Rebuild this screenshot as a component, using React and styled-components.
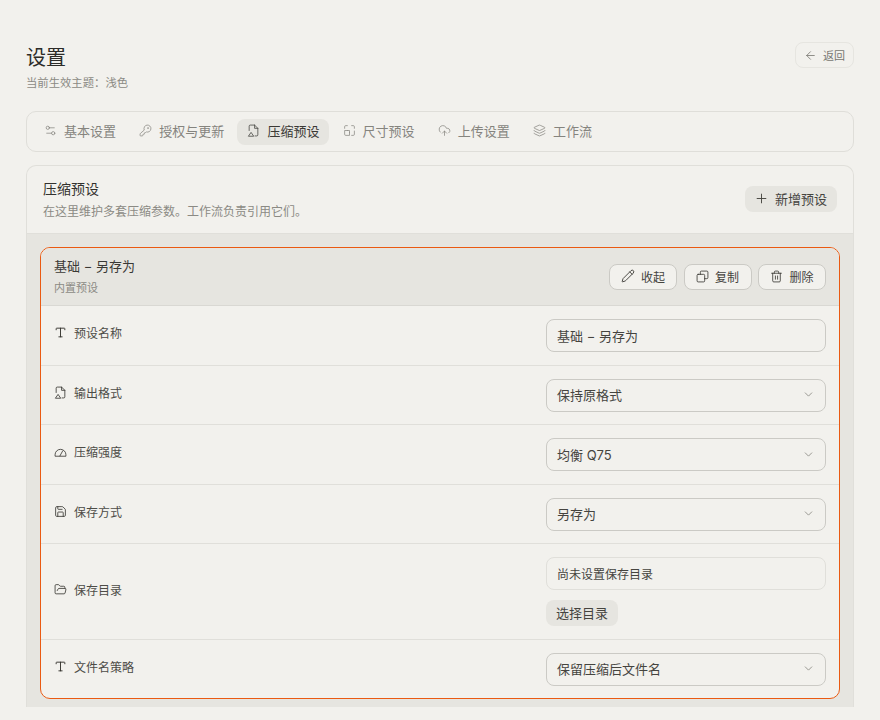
import styled, { createGlobalStyle } from "styled-components";
import {
  ArrowLeft,
  ChevronDown,
  CloudUpload,
  FolderOpen,
  KeyRound,
  Layers,
  Pencil,
  Plus,
  Save,
  Settings2,
  Trash2,
  Type,
} from "lucide-react";

const GlobalStyle = createGlobalStyle`
  html, body {
    margin: 0;
    height: 100%;
    overflow: hidden;
    background: #f2f1ed;
  }
  body {
    font-family: "Inter", "Liberation Sans", "Noto Sans CJK SC", sans-serif;
    color: #3a3935;
  }
  * { box-sizing: border-box; }
`;

const Page = styled.div`
  height: 720px;
  padding: 42px 26px 13px;
  display: flex;
  flex-direction: column;
`;

const Header = styled.header`
  display: flex;
  justify-content: space-between;
  align-items: flex-start;
  height: 69px;
`;

const Title = styled.h1`
  margin: 0;
  padding-top: 2px;
  font-size: 20px;
  line-height: 28px;
  font-weight: 400;
  color: #2c2b28;
`;

const Subtitle = styled.p`
  margin: 3px 0 0;
  font-size: 11.35px;
  line-height: 16px;
  color: #8b8a84;
`;

const BackButton = styled.button`
  display: flex;
  align-items: center;
  gap: 6px;
  height: 26px;
  padding: 0 8px;
  border: 1px solid #e6e5e0;
  border-radius: 8px;
  background: transparent;
  font: inherit;
  font-size: 11px;
  color: #777670;
`;

const TabBar = styled.nav`
  display: flex;
  align-items: center;
  gap: 3.2px;
  height: 41px;
  padding: 0 7px;
  border: 1px solid #dfded9;
  border-radius: 10px;
`;

const Tab = styled.div`
  display: flex;
  align-items: center;
  gap: 7px;
  height: 26px;
  padding: 0 10px 2px;
  border-radius: 8px;
  font-size: 13px;
  color: ${(p) => (p.$active ? "#3a3935" : "#85847e")};
  background: ${(p) => (p.$active ? "#e6e5e0" : "transparent")};
`;

const Panel = styled.section`
  flex: 1;
  min-height: 0;
  margin-top: 13px;
  display: flex;
  flex-direction: column;
  overflow: hidden;
  border: 1px solid #e0dfda;
  border-bottom: none;
  border-radius: 10px 10px 0 0;
`;

const PanelHead = styled.div`
  flex: none;
  display: flex;
  justify-content: space-between;
  align-items: center;
  height: 68px;
  padding: 0 16px;
  border-bottom: 1px solid #e0dfda;
`;

const PanelTitle = styled.div`
  font-size: 14px;
  line-height: 20px;
  color: #32312e;
`;

const PanelHint = styled.div`
  margin-top: 5px;
  font-size: 12px;
  line-height: 16px;
  color: #8b8a84;
`;

const AddButton = styled.button`
  display: flex;
  align-items: center;
  gap: 6px;
  height: 26px;
  margin-bottom: 1px;
  padding: 0 10px 1px 9px;
  border: none;
  border-radius: 8px;
  background: #e6e5e0;
  font: inherit;
  font-size: 13px;
  color: #45443f;
`;

const PanelBody = styled.div`
  flex: 1;
  min-height: 0;
  padding: 13px 13px 0;
  background: #e6e5e0;
`;

const Card = styled.article`
  border: 1px solid #ea5a12;
  border-radius: 10px;
  overflow: hidden;
  background: #f2f1ed;
`;

const CardHead = styled.div`
  display: flex;
  justify-content: space-between;
  align-items: center;
  height: 58px;
  padding: 0 13px;
  background: #e6e5e0;
  border-bottom: 1px solid #d9d8d3;
`;

const CardTitle = styled.div`
  font-size: 13px;
  line-height: 18px;
  color: #3a3935;
`;

const CardTag = styled.div`
  margin-top: 5px;
  font-size: 11px;
  line-height: 16px;
  color: #8b8a84;
`;

const Actions = styled.div`
  display: flex;
  gap: 6.5px;
`;

const ActionButton = styled.button`
  display: flex;
  align-items: center;
  justify-content: center;
  gap: 6px;
  width: 68px;
  height: 26px;
  padding: 0 0 1px;
  border: 1px solid #cbcac5;
  border-radius: 8px;
  background: #f2f1ed;
  font: inherit;
  font-size: 12px;
  color: #45443f;
  svg {
    color: #35342f;
  }
`;

const Row = styled.div`
  display: flex;
  justify-content: space-between;
  align-items: center;
  min-height: ${(p) => (p.$tall ? "96px" : "59.5px")};
  padding: 0 13px;
  border-bottom: 1px solid #e0dfda;
  &:last-child {
    min-height: 58px;
    border-bottom: none;
  }
`;

const Label = styled.div`
  display: flex;
  align-items: center;
  gap: 7px;
  margin-top: -5px;
  font-size: 12px;
  color: #4d4c47;
  svg {
    color: #35342f;
  }
`;

const Control = styled.div`
  display: flex;
  flex-direction: column;
  align-items: flex-start;
  gap: 10px;
  width: 280px;
  margin-top: 0.5px;
`;

const Field = styled.div`
  display: flex;
  justify-content: space-between;
  align-items: center;
  width: 100%;
  height: 33px;
  padding: 0 10px 1px;
  border: 1px solid ${(p) => (p.$muted ? "#e0dfda" : "#cbcac5")};
  border-radius: 8px;
  font-size: ${(p) => (p.$muted ? "12px" : "13px")};
  color: #45443f;
`;

const PickButton = styled.button`
  height: 26px;
  padding: 0 10px 2px;
  border: none;
  border-radius: 8px;
  background: #e6e5e0;
  font: inherit;
  font-size: 13px;
  color: #45443f;
`;

const Glyph = ({ size = 13, strokeWidth = 1.5, children }) => (
  <svg
    width={size}
    height={size}
    viewBox="0 0 24 24"
    fill="none"
    stroke="currentColor"
    strokeWidth={strokeWidth}
    strokeLinecap="round"
    strokeLinejoin="round"
  >
    {children}
  </svg>
);

const FileShot = (props) => (
  <Glyph {...props}>
    <path d="M4 12V4a2 2 0 0 1 2-2h8l6 6v12a2 2 0 0 1-2 2h-3" />
    <path d="M14 2v6h6" />
    <path d="M3 22l4.5-6.5L12 22z" />
  </Glyph>
);

const SizeFrame = (props) => (
  <Glyph {...props}>
    <path d="M3 8V5a2 2 0 0 1 2-2h3" />
    <path d="M16 3h3a2 2 0 0 1 2 2v3" />
    <path d="M21 13v6a2 2 0 0 1-2 2h-3" />
    <path d="M8 12H3v7a2 2 0 0 0 2 2h7v-5" />
    <path d="M8 12h4v4" />
  </Glyph>
);

const Dial = (props) => (
  <Glyph {...props}>
    <path d="M2 20v-2a10 10 0 0 1 20 0v2z" />
    <path d="M11 20l5-9" />
  </Glyph>
);

const Duplicate = (props) => (
  <Glyph {...props}>
    <rect x="2" y="8" width="14" height="14" rx="2" />
    <path d="M8 8V4a2 2 0 0 1 2-2h10a2 2 0 0 1 2 2v10a2 2 0 0 1-2 2h-4" />
  </Glyph>
);

const tabs = [
  { icon: Settings2, text: "基本设置" },
  { icon: KeyRound, text: "授权与更新" },
  { icon: FileShot, text: "压缩预设", active: true },
  { icon: SizeFrame, text: "尺寸预设" },
  { icon: CloudUpload, text: "上传设置" },
  { icon: Layers, text: "工作流" },
];

const Select = ({ value }) => (
  <Field>
    {value}
    <ChevronDown size={13} strokeWidth={1.5} color="#85847e" />
  </Field>
);

const App = () => {
  return (
    <Page>
      <GlobalStyle />
      <Header>
        <div>
          <Title>设置</Title>
          <Subtitle>当前生效主题：浅色</Subtitle>
        </div>
        <BackButton>
          <ArrowLeft size={13} strokeWidth={1.5} />
          返回
        </BackButton>
      </Header>

      <TabBar>
        {tabs.map((t) => (
          <Tab key={t.text} $active={t.active}>
            <t.icon size={13} strokeWidth={1.35} />
            {t.text}
          </Tab>
        ))}
      </TabBar>

      <Panel>
        <PanelHead>
          <div>
            <PanelTitle>压缩预设</PanelTitle>
            <PanelHint>在这里维护多套压缩参数。工作流负责引用它们。</PanelHint>
          </div>
          <AddButton>
            <Plus size={15} strokeWidth={1.5} />
            新增预设
          </AddButton>
        </PanelHead>
        <PanelBody>
          <Card>
            <CardHead>
              <div>
                <CardTitle>基础 − 另存为</CardTitle>
                <CardTag>内置预设</CardTag>
              </div>
              <Actions>
                <ActionButton>
                  <Pencil size={14} strokeWidth={1.5} />
                  收起
                </ActionButton>
                <ActionButton>
                  <Duplicate strokeWidth={1.5} />
                  复制
                </ActionButton>
                <ActionButton>
                  <Trash2 size={13} strokeWidth={1.5} />
                  删除
                </ActionButton>
              </Actions>
            </CardHead>
            <Row>
              <Label>
                <Type size={13} strokeWidth={1.75} />
                预设名称
              </Label>
              <Control>
                <Field>基础 − 另存为</Field>
              </Control>
            </Row>
            <Row>
              <Label>
                <FileShot />
                输出格式
              </Label>
              <Control>
                <Select value="保持原格式" />
              </Control>
            </Row>
            <Row>
              <Label>
                <Dial />
                压缩强度
              </Label>
              <Control>
                <Select value="均衡 Q75" />
              </Control>
            </Row>
            <Row>
              <Label>
                <Save size={13} strokeWidth={1.5} />
                保存方式
              </Label>
              <Control>
                <Select value="另存为" />
              </Control>
            </Row>
            <Row $tall>
              <Label>
                <FolderOpen size={13} strokeWidth={1.5} />
                保存目录
              </Label>
              <Control>
                <Field $muted>尚未设置保存目录</Field>
                <PickButton>选择目录</PickButton>
              </Control>
            </Row>
            <Row>
              <Label>
                <Type size={13} strokeWidth={1.75} />
                文件名策略
              </Label>
              <Control>
                <Select value="保留压缩后文件名" />
              </Control>
            </Row>
          </Card>
        </PanelBody>
      </Panel>
    </Page>
  );
};

export default App;
